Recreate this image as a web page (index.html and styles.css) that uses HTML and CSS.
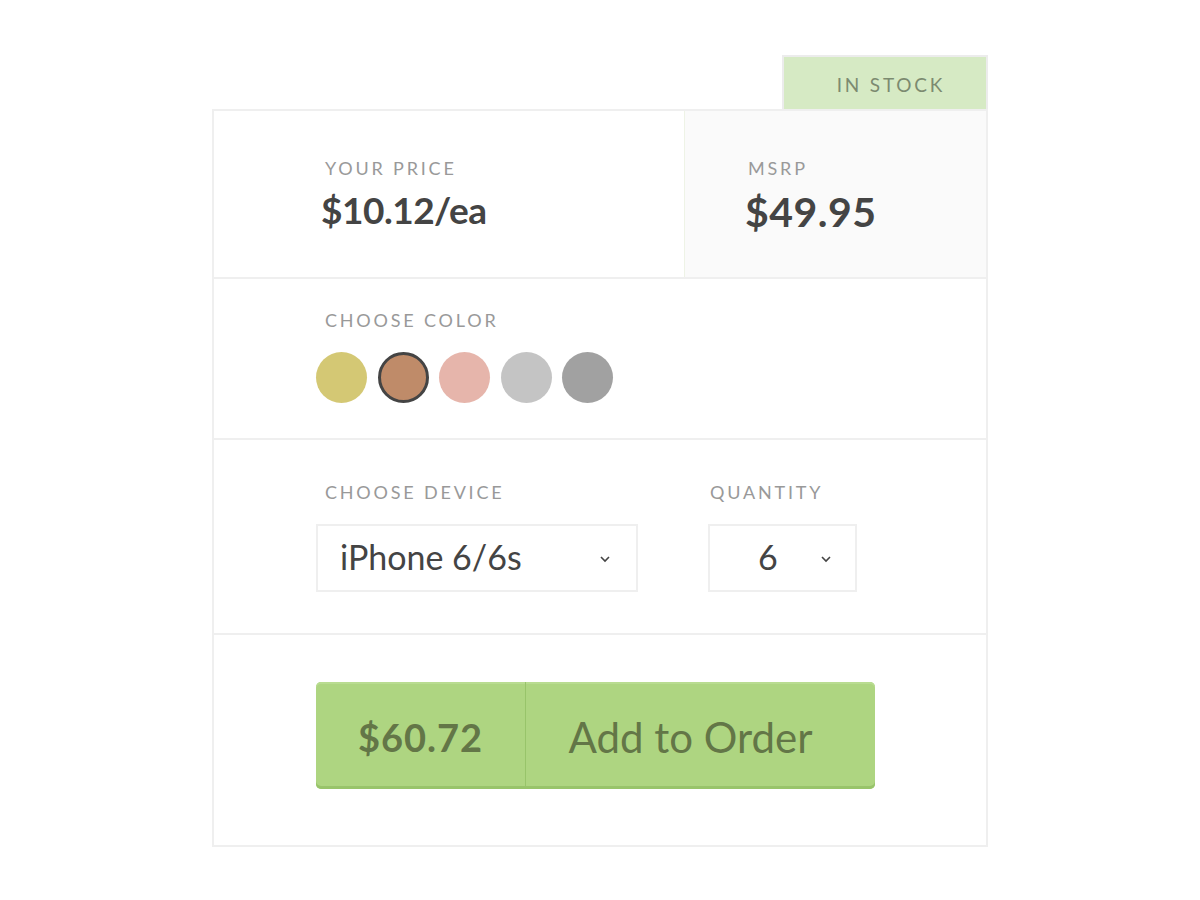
FILE: index.html
```html
<!DOCTYPE html>
<html>
<head>
<meta charset="utf-8">
<link rel="stylesheet" href="styles.css">
</head>
<body>
<div class="wrap">
  <div class="badge-row"><div class="badge">IN STOCK</div></div>
  <div class="card">
    <div class="price-row">
      <div class="price-col">
        <div class="label">YOUR PRICE</div>
        <div class="price">$10.12/ea</div>
      </div>
      <div class="msrp-col">
        <div class="label">MSRP</div>
        <div class="msrp">$49.95</div>
      </div>
    </div>
    <div class="section color-row">
      <div class="label">CHOOSE COLOR</div>
      <div class="swatches">
        <span class="swatch gold"></span>
        <span class="swatch bronze selected"></span>
        <span class="swatch rose"></span>
        <span class="swatch silver"></span>
        <span class="swatch gray"></span>
      </div>
    </div>
    <div class="section device-row">
      <div class="field">
        <div class="label">CHOOSE DEVICE</div>
        <div class="select device-select"><span>iPhone 6/6s</span>
          <svg class="chev" width="12" height="8" viewBox="0 0 12 8"><path d="M2 2l4 4 4-4" fill="none" stroke="#444" stroke-width="1.6"/></svg>
        </div>
      </div>
      <div class="field qty-field">
        <div class="label">QUANTITY</div>
        <div class="select qty-select"><span>6</span>
          <svg class="chev" width="12" height="8" viewBox="0 0 12 8"><path d="M2 2l4 4 4-4" fill="none" stroke="#444" stroke-width="1.6"/></svg>
        </div>
      </div>
    </div>
    <div class="section button-row">
      <button class="order-btn"><span class="total">$60.72</span><span class="action">Add to Order</span></button>
    </div>
  </div>
</div>
</body>
</html>
```
FILE: styles.css
```css
* { box-sizing: border-box; }
body { margin: 0; background: #fff; font-family: Lato, "Noto Sans", sans-serif; color: #444; }
.wrap { width: 776px; margin: 55px auto 0; }
.badge-row { display: flex; justify-content: flex-end; }
.badge { width: 206px; height: 54px; background: #d6eac4; border: 2px solid #ececec; border-bottom: none; display: flex; align-items: center; justify-content: center; font-size: 19px; letter-spacing: 2.8px; color: #7c8a70; padding-left: 12px; padding-top: 2px; }
.card { border: 2px solid #efefef; }
.label { font-size: 18px; letter-spacing: 2.8px; color: #999; line-height: 20px; }
.price-row { display: flex; height: 168px; border-bottom: 2px solid #efefef; }
.price-col { flex: 1; padding: 47px 0 0 111px; }
.msrp-col { width: 302px; background: #fafafa; border-left: 1px solid #eef3e6; padding: 47px 0 0 63px; }
.price { font-size: 37px; font-weight: 700; color: #444; margin-top: 9px; margin-left: -4px; letter-spacing: -0.5px; }
.msrp { font-size: 41px; font-weight: 700; color: #444; margin-top: 9px; margin-left: -3px; letter-spacing: 0.5px; }
.section { border-bottom: 2px solid #efefef; padding-left: 102px; }
.color-row { height: 161px; padding-top: 31px; }
.color-row .label { margin-left: 9px; }
.swatches { display: flex; gap: 10.5px; margin-top: 22px; }
.swatch { width: 51px; height: 51px; border-radius: 50%; display: block; }
.gold { background: #d4c874; }
.bronze { background: #bf8b69; }
.selected { border: 3px solid #444; }
.rose { background: #e6b5ab; }
.silver { background: #c4c4c4; }
.gray { background: #a1a1a1; }
.device-row { height: 195px; padding-top: 42px; display: flex; gap: 70px; }
.field .label { margin-left: 9px; margin-bottom: 22px; }
.qty-field .label { margin-left: 2px; }
.select { height: 68px; border: 2px solid #efefef; display: flex; align-items: center; position: relative; font-size: 34px; color: #444; padding-bottom: 4px; }
.device-select { width: 322px; padding-left: 22px; }
.qty-select { width: 149px; padding-left: 48px; }
.chev { position: absolute; top: 29px; }
.device-select .chev { left: 281px; }
.qty-select .chev { left: 110px; }
.button-row { border-bottom: none; padding-top: 47px; padding-bottom: 56px; }
.order-btn { display: flex; width: 559px; height: 107px; padding: 0; border: none; border-radius: 5px; background: #aed581; box-shadow: inset 0 -3px 0 #98c46a, inset 0 2px 0 #b9dc91; font-family: Lato, sans-serif; color: #637647; cursor: pointer; }
.total { width: 210px; height: 100%; display: flex; align-items: center; justify-content: center; font-size: 38px; font-weight: 700; letter-spacing: 1px; border-right: 1px solid #98c46a; padding-top: 2px; }
.action { flex: 1; display: flex; align-items: center; justify-content: center; font-size: 42px; padding-top: 2px; padding-right: 20px; }
```
